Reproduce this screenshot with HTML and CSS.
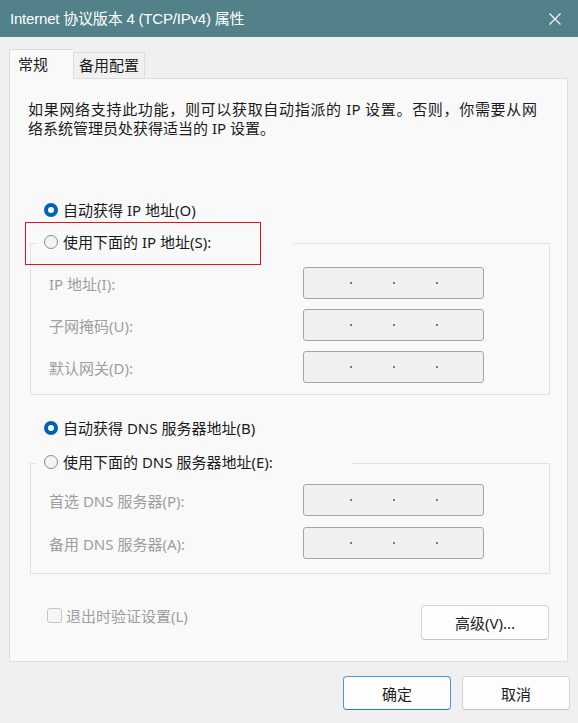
FILE: index.html
```html
<!DOCTYPE html>
<html lang="zh-CN">
<head>
<meta charset="utf-8">
<link rel="stylesheet" href="styles.css">
</head>
<body>
<div class="window">
  <div class="titlebar">
    <span class="title">Internet 协议版本 4 (TCP/IPv4) 属性</span>
    <svg class="close" width="12" height="12" viewBox="0 0 12 12"><path d="M0.5 0.5 L11.5 11.5 M11.5 0.5 L0.5 11.5" stroke="#ffffff" stroke-width="1.1" fill="none"/></svg>
  </div>
  <div class="content">
    <div class="tabs">
      <div class="tab active">常规</div>
      <div class="tab">备用配置</div>
    </div>
    <div class="panel">
      <p class="intro"><span class="line1">如果网络支持此功能，则可以获取自动指派的 IP 设置。否则，你需要从网</span><span class="line2">络系统管理员处获得适当的 IP 设置。</span></p>

      <div class="radio-row first"><span class="radio on"></span><span>自动获得 IP 地址(O)</span></div>

      <div class="group g1">
        <div class="legend"><span class="radio"></span><span>使用下面的 IP 地址(S):</span></div>
        <div class="fields">
          <span class="lbl">IP 地址(I):</span><span class="ipbox"><i></i><i></i><i></i></span>
          <span class="lbl">子网掩码(U):</span><span class="ipbox"><i></i><i></i><i></i></span>
          <span class="lbl">默认网关(D):</span><span class="ipbox"><i></i><i></i><i></i></span>
        </div>
      </div>

      <div class="radio-row second"><span class="radio on"></span><span>自动获得 DNS 服务器地址(B)</span></div>

      <div class="group g2">
        <div class="legend"><span class="radio"></span><span>使用下面的 DNS 服务器地址(E):</span></div>
        <div class="fields">
          <span class="lbl">首选 DNS 服务器(P):</span><span class="ipbox"><i></i><i></i><i></i></span>
          <span class="lbl">备用 DNS 服务器(A):</span><span class="ipbox"><i></i><i></i><i></i></span>
        </div>
      </div>

      <div class="bottom-row">
        <label class="check"><span class="box"></span><span>退出时验证设置(L)</span></label>
        <button class="btn adv">高级(V)...</button>
      </div>

      <div class="highlight"></div>
    </div>
    <div class="footer">
      <button class="btn ok">确定</button>
      <button class="btn">取消</button>
    </div>
  </div>
</div>
</body>
</html>
```
FILE: styles.css
```css
* { box-sizing: border-box; }
html, body { margin: 0; padding: 0; }
body {
  width: 578px;
  height: 723px;
  background: #f0f0f0;
  font-family: "Noto Sans", "Noto Sans CJK SC", sans-serif;
  font-size: 15px;
  color: #1b1b1b;
  overflow: hidden;
}
.window {
  width: 578px;
  height: 723px;
  background: #f0f0f0;
  display: flex;
  flex-direction: column;
}
.titlebar {
  height: 37px;
  background: #52818a;
  color: #ffffff;
  display: flex;
  align-items: center;
  justify-content: space-between;
  padding: 0 17px 0 10px;
  flex-shrink: 0;
}
.title {
  font-family: "Liberation Sans", "Noto Sans CJK SC", sans-serif;
  font-size: 15px;
  line-height: 20px;
  letter-spacing: -0.2px;
}
.close { display: block; }

.content { padding: 0 10px 0 9px; }

.tabs {
  display: flex;
  align-items: flex-end;
  margin-top: 12px;
  height: 29px;
  position: relative;
  z-index: 2;
}
.tab {
  height: 26px;
  padding: 0 5px;
  line-height: 24px;
  border: 1px solid #dddddd;
  border-bottom: none;
  background: #f0f0f0;
  color: #1b1b1b;
}
.tab.active {
  height: 30px;
  width: 64px;
  padding: 0 0 0 8px;
  line-height: 28px;
  background: #f9f9f9;
  margin-bottom: -1px;
  border-right: none;
}

.panel {
  position: relative;
  width: 559px;
  height: 584px;
  background: #f9f9f9;
  border: 1px solid #dedede;
  display: flex;
  flex-direction: column;
}

.intro {
  margin: 21px 0 0 18px;
  width: 509px;
  line-height: 19px;
}
.line1 {
  display: block;
  text-align: justify;
  text-align-last: justify;
}
.line2 { display: block; }

.radio-row, .legend {
  display: flex;
  align-items: center;
  height: 20px;
  gap: 5px;
  line-height: 20px;
}
.radio-row { margin-left: 34px; }
.radio-row.first { margin-top: 62px; }
.radio-row.second { margin-top: 23px; }

.radio {
  width: 14px;
  height: 14px;
  border-radius: 50%;
  border: 1px solid #8a8a8a;
  background: #f3f3f3;
  flex-shrink: 0;
}
.radio.on {
  border: 4px solid #0062b8;
  background: #ffffff;
}

.group {
  margin: 0 17px 0 20px;
  border: 1px solid #e2e2e2;
  display: flex;
  flex-direction: column;
}
.g1 { margin-top: 23px; padding-bottom: 11px; }
.g2 { margin-top: 25px; padding-bottom: 14px; }

.legend {
  margin: -12px 0 0 5px;
  padding-left: 8px;
  background: #f9f9f9;
}
.g1 .legend { width: 257px; }
.g2 .legend { width: 316px; }

.fields {
  display: grid;
  grid-template-columns: 254px 181px;
  row-gap: 10px;
  padding-left: 18px;
  align-items: center;
}
.g1 .fields { margin-top: 15px; }
.g2 .fields { margin-top: 12px; row-gap: 11px; }

.lbl { color: #9e9e9e; }

.ipbox {
  height: 32px;
  border: 1px solid #a5a5a5;
  border-radius: 3px;
  background: #f0f0f0;
  display: flex;
  align-items: center;
  padding-left: 46px;
  gap: 41px;
}
.ipbox i {
  width: 2px;
  height: 2px;
  background: #6c7e96;
  display: block;
}

.bottom-row {
  display: flex;
  justify-content: space-between;
  align-items: flex-start;
  margin: 32px 18px 0 37px;
}
.check {
  display: flex;
  align-items: center;
  gap: 4px;
  color: #9e9e9e;
  height: 18px;
}
.box {
  width: 15px;
  height: 15px;
  border: 1px solid #c6c6c6;
  border-radius: 3px;
  background: #f6f6f6;
}

.btn {
  font-family: "Noto Sans", "Noto Sans CJK SC", sans-serif;
  font-size: 15px;
  color: #1b1b1b;
  background: #fdfdfd;
  border: 1px solid #d3d3d3;
  border-bottom-color: #c2c2c2;
  border-radius: 4px;
  padding: 0;
  height: 34px;
}
.adv { width: 128px; height: 35px; margin-top: -1px; }

.footer {
  display: flex;
  justify-content: flex-end;
  gap: 11px;
  margin-top: 14px;
  margin-right: -2px;
}
.footer .btn { width: 108px; }
.btn.ok {
  border: 1px solid #4f95d4;
  border-bottom-color: #2f7cc2;
}

.highlight {
  position: absolute;
  left: 15px;
  top: 143px;
  width: 236px;
  height: 43px;
  border: 1px solid #e8101e;
}
```
